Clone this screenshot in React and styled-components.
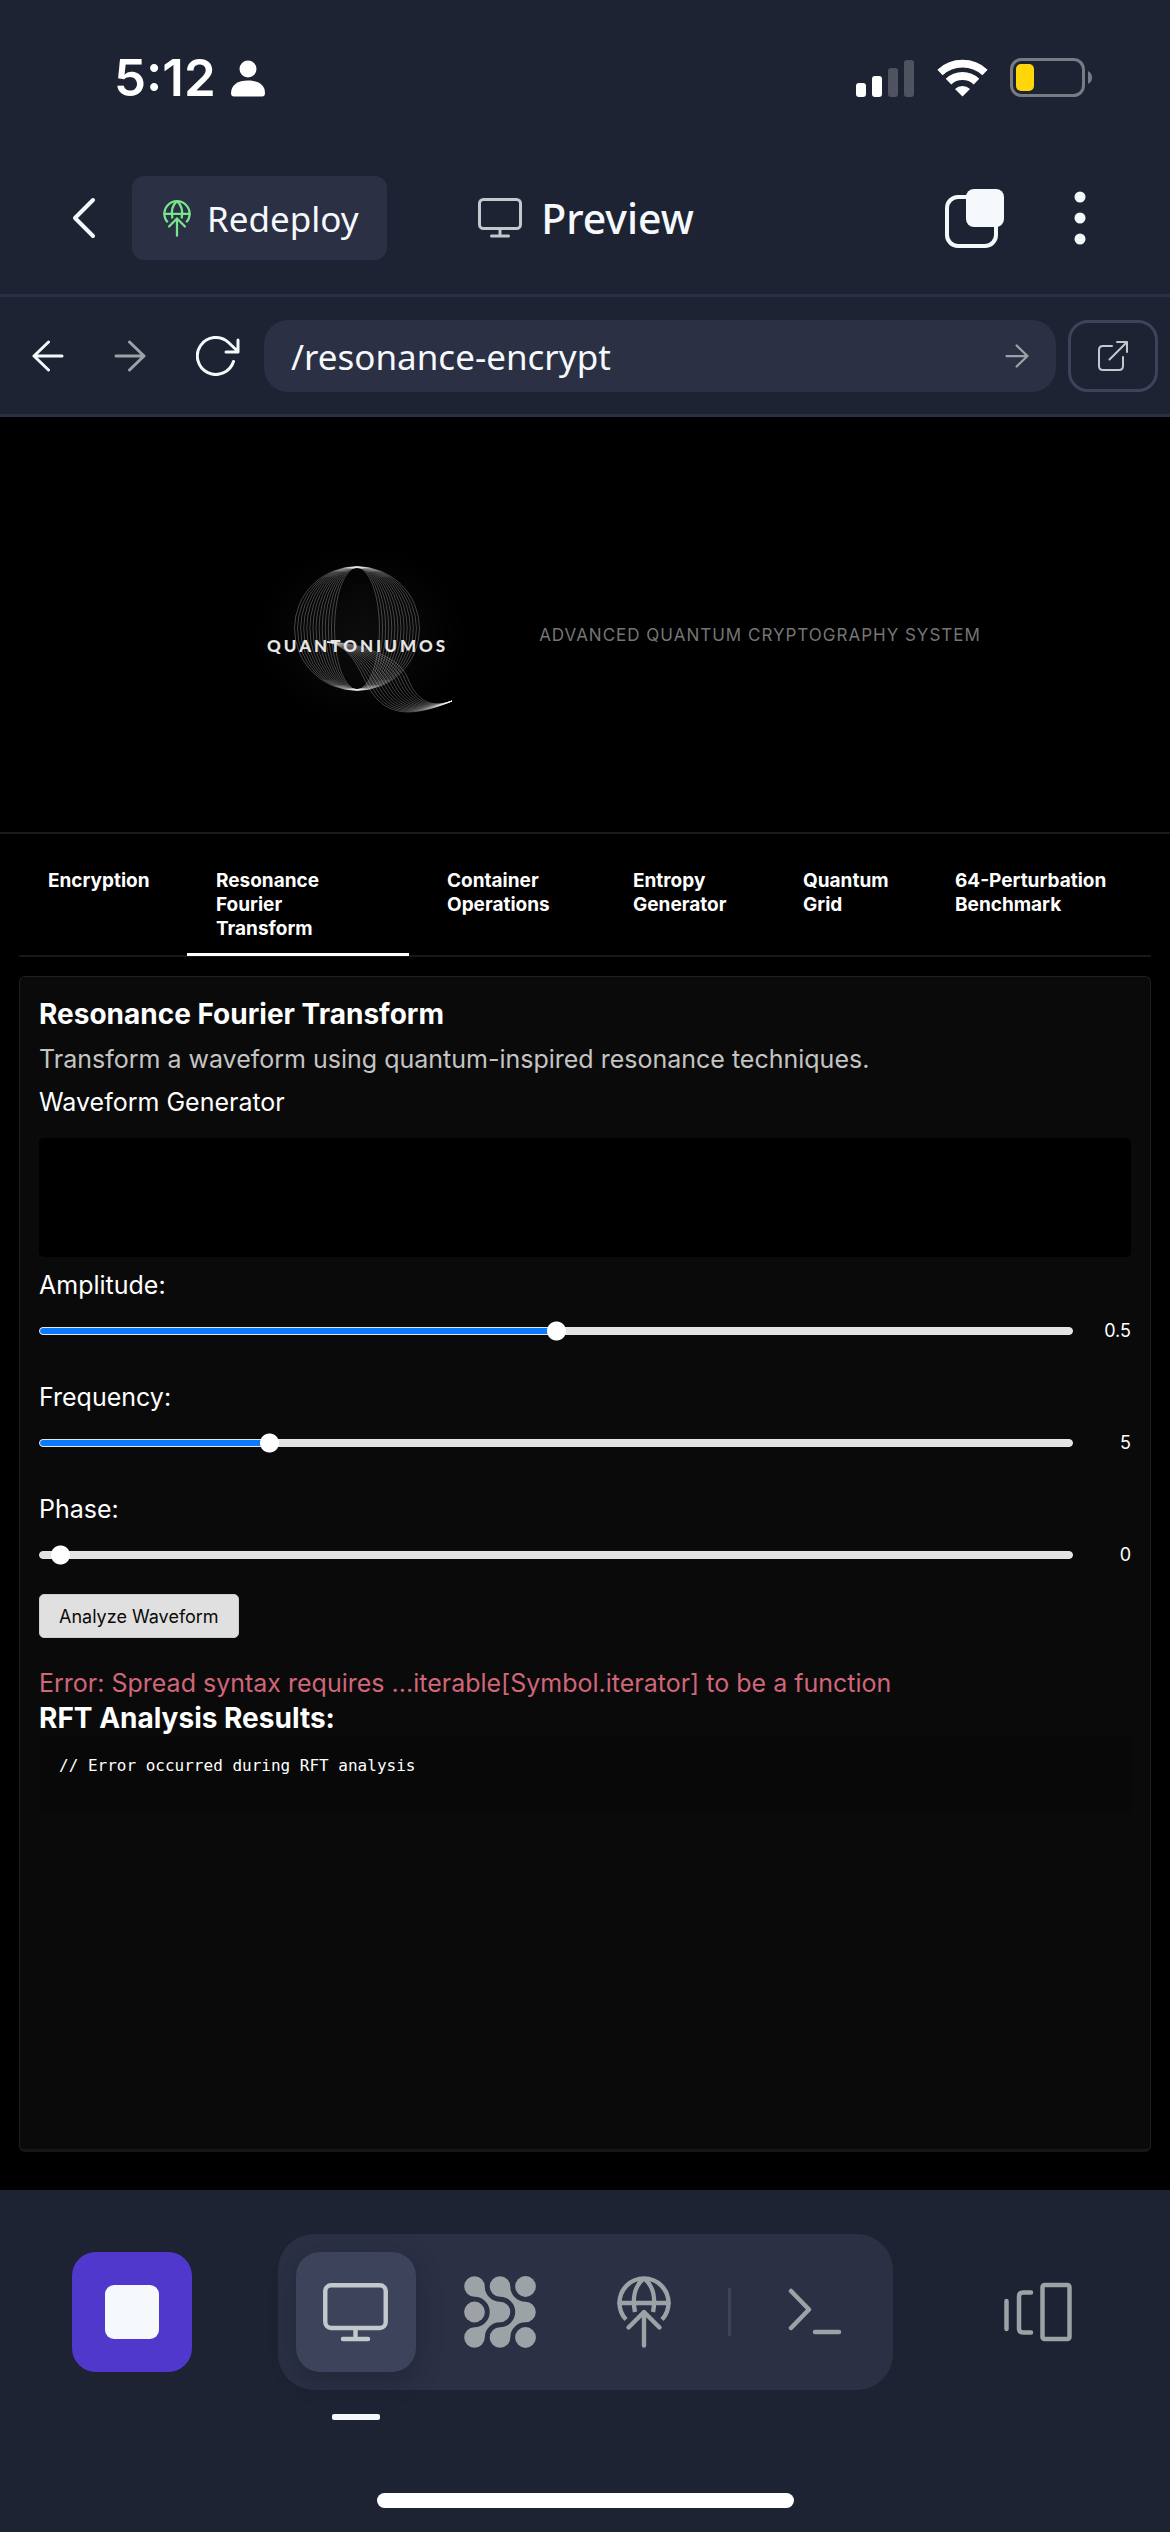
import React, { useState } from "react";
import styled, { createGlobalStyle } from "styled-components";

const sans = '"Inter", "Liberation Sans", sans-serif';
const chrome = '"Noto Sans", "Open Sans", sans-serif';
const navy = "#1d2332";
const slate = "#2b3044";
const slateLight = "#3c435b";
const paper = "#f5f9fc";
const muted = "#9da2a6";

const GlobalStyle = createGlobalStyle`
  *, *::before, *::after { box-sizing: border-box; }
  body { margin: 0; background: #000; }
  h1, h2, h3, p, pre { margin: 0; }
  button, input { font: inherit; color: inherit; }
`;

const Screen = styled.div`
  display: flex;
  flex-direction: column;
  min-height: 100vh;
  background: #000;
  color: #fff;
  font-family: ${sans};
`;

const Icon = styled.svg`
  display: block;
  flex: none;
  fill: none;
  stroke: currentColor;
  stroke-width: ${(p) => p.$stroke || 3};
  stroke-linecap: round;
  stroke-linejoin: round;
`;

const PlainButton = styled.button`
  display: flex;
  align-items: center;
  justify-content: center;
  padding: 0;
  border: 0;
  background: none;
  color: ${(p) => p.$color || paper};
  cursor: pointer;
`;

/* Status bar */
const StatusBar = styled.div`
  display: flex;
  align-items: center;
  justify-content: space-between;
  padding: 48px 78px 34px 114px;
  background: ${navy};
`;

const StatusGroup = styled.div`
  display: flex;
  align-items: center;
  gap: ${(p) => p.$gap}px;
`;

const Clock = styled.span`
  font-size: 51px;
  line-height: 60px;
  font-weight: 600;
`;

/* App header */
const Header = styled.header`
  display: grid;
  grid-template-columns: 1fr auto 1fr;
  align-items: center;
  padding: 34px 70px 34px 72px;
  background: ${navy};
  border-bottom: 3px solid ${slate};
  font-family: ${chrome};
`;

const HeaderSide = styled.div`
  display: flex;
  align-items: center;
  justify-content: ${(p) => (p.$end ? "flex-end" : "flex-start")};
  gap: ${(p) => (p.$end ? 56 : 36)}px;
`;

const Redeploy = styled.button`
  display: flex;
  align-items: center;
  gap: 16px;
  height: 84px;
  padding: 0 28px 0 31px;
  border: 0;
  border-radius: 12px;
  background: ${slate};
  color: ${paper};
  font-size: 35px;
  cursor: pointer;
`;

const Title = styled.h1`
  display: flex;
  align-items: center;
  gap: 19px;
  color: ${paper};
  font-size: 41px;
  line-height: 48px;
  font-weight: 500;
`;

/* Address bar */
const AddressBar = styled.nav`
  display: flex;
  align-items: center;
  gap: 12px;
  padding: 23px 12px 22px 32px;
  background: ${navy};
  border-bottom: 3px solid ${slate};
  font-family: ${chrome};
`;

const HistoryButtons = styled.div`
  display: flex;
  align-items: center;
  gap: 50px;
  margin-right: 12px;
`;

const Address = styled.form`
  display: flex;
  align-items: center;
  flex: 1;
  min-width: 0;
  height: 72px;
  padding: 0 27px;
  border-radius: 24px;
  background: ${slate};
`;

const AddressInput = styled.input`
  flex: 1;
  min-width: 0;
  padding: 0;
  border: 0;
  outline: 0;
  background: none;
  color: ${paper};
  font-size: 35px;
`;

const OpenExternal = styled(PlainButton)`
  width: 90px;
  height: 72px;
  border: 3px solid ${slateLight};
  border-radius: 20px;
`;

/* Page banner */
const Banner = styled.div`
  display: flex;
  align-items: center;
  justify-content: center;
  gap: 60px;
  padding: 128px 0 107px 60px;
  border-bottom: 2px solid #1a1a1a;
`;

const Tagline = styled.p`
  color: #757575;
  font-size: 17px;
  line-height: 24px;
  letter-spacing: 1px;
  text-transform: uppercase;
`;

const Wordmark = styled.text`
  fill: #e6e6e6;
  stroke: none;
  font-family: "Lato", sans-serif;
  font-size: 17px;
  font-weight: 900;
  letter-spacing: 3px;
`;

/* Tabs and panel */
const Content = styled.main`
  display: flex;
  flex-direction: column;
  flex: 1;
  padding: 20px 19px 38px;
`;

const TabList = styled.div`
  display: grid;
  grid-template-columns: 159fr 222fr 177fr 161fr 143fr 225fr;
  gap: 9px;
  border-bottom: 2px solid #171717;
`;

const Tab = styled.button`
  display: flex;
  align-items: flex-start;
  margin-bottom: -1px;
  padding: 15px 0 12px 29px;
  border: 0;
  border-bottom: 3px solid ${(p) => (p.$active ? "#fff" : "transparent")};
  background: none;
  color: #fff;
  font-size: 19px;
  line-height: 24px;
  font-weight: 700;
  text-align: left;
  white-space: pre-line;
  cursor: pointer;
`;

const Panel = styled.section`
  display: flex;
  flex-direction: column;
  align-items: stretch;
  flex: 1;
  margin-top: 19px;
  padding: 16px 19px;
  border: 1px solid #202020;
  border-bottom: 3px solid #171717;
  border-radius: 6px;
  background: #0a0a0a;
`;

const PanelTitle = styled.h2`
  margin-bottom: 2px;
  font-size: 28px;
  line-height: 43px;
  font-weight: 700;
`;

const BodyText = styled.p`
  color: ${(p) => p.$color || "#fff"};
  font-size: 25px;
  line-height: 43px;
`;

const WaveCanvas = styled.canvas`
  width: 100%;
  height: 119px;
  margin: 14px 0 8px;
  border-radius: 5px;
  background: #000;
`;

const Fields = styled.div`
  display: grid;
  gap: 34px;
`;

const Field = styled.div`
  display: grid;
  grid-template-columns: 1fr 58px;
  row-gap: 14px;
  align-items: center;
`;

const FieldLabel = styled.label`
  grid-column: 1 / -1;
  font-size: 25px;
  line-height: 40px;
`;

const FieldValue = styled.output`
  font-size: 18px;
  line-height: 24px;
  text-align: right;
`;

const Range = styled.input`
  appearance: none;
  width: 100%;
  height: 24px;
  margin: 0;
  background: none;
  cursor: pointer;

  &::-webkit-slider-runnable-track {
    height: 8px;
    border: 1px solid #e9e4e6;
    border-radius: 4px;
    background: linear-gradient(#0a7bff, #0a7bff) 0 0 / var(--fill) 100% no-repeat #e3e3e3;
  }

  &::-webkit-slider-thumb {
    appearance: none;
    width: 41px;
    height: 22px;
    margin-top: -8px;
    background: radial-gradient(circle, #fff 9px, transparent 10px);
  }
`;

const Analyze = styled.button`
  align-self: flex-start;
  height: 44px;
  margin: 27px 0 28px;
  padding: 0 19px;
  border: 1px solid #cfcfcf;
  border-radius: 5px;
  background: #e0e0e0;
  color: #0a0a0a;
  font-size: 18px;
  cursor: pointer;
`;

const ErrorText = styled.p`
  color: #cf6679;
  font-size: 25px;
  line-height: 35px;
`;

const ResultsTitle = styled.h3`
  font-size: 28px;
  line-height: 35px;
  font-weight: 700;
`;

const Results = styled.pre`
  min-height: 76px;
  padding: 18px 20px;
  background: #080808;
  font-family: "DejaVu Sans Mono", monospace;
  font-size: 16px;
  line-height: 24px;
`;

/* Bottom dock */
const Footer = styled.footer`
  padding: 44px 72px 24px;
  background: ${navy};
`;

const DockRow = styled.div`
  display: flex;
  justify-content: space-between;
`;

const DockSquare = styled(PlainButton)`
  width: 120px;
  height: 120px;
  margin-top: ${(p) => (p.$outer ? 18 : 0)}px;
  border-radius: 24px;
  background: ${(p) => p.$bg || "none"};
  box-shadow: ${(p) => (p.$raised ? "0 8px 24px rgba(20, 24, 40, 0.4)" : "none")};
`;

const StopMark = styled.span`
  width: 54px;
  height: 54px;
  border-radius: 9px;
  background: ${paper};
`;

const Dock = styled.div`
  display: flex;
  align-items: center;
  gap: 24px;
  padding: 18px;
  border-radius: 36px;
  background: ${slate};
`;

const Divider = styled.span`
  width: 3px;
  height: 48px;
  background: ${slateLight};
`;

const ActiveMark = styled.div`
  width: 48px;
  height: 6px;
  margin: 24px 0 0 54px;
  border-radius: 2px;
  background: ${paper};
`;

const HomeIndicator = styled.div`
  width: 417px;
  height: 15px;
  margin: 73px auto 0;
  border-radius: 8px;
  background: #fff;
`;

function Monitor({ width, height }) {
  return (
    <Icon width={width} height={height} viewBox="0 0 44 40" color="#c3c8cc" aria-hidden="true">
      <rect x="1.5" y="1.5" width="41" height="29" rx="4" />
      <path d="M22 31v7M13.5 38h17" />
    </Icon>
  );
}

function DeployGlobe({ width, height }) {
  return (
    <Icon width={width} height={height} viewBox="0 0 54 72" $stroke={4.4} aria-hidden="true">
      <path d="M9 43.500A24.500 24.500 0 1 1 45 43.500" strokeLinecap="butt" />
      <path d="M2.500 27H51.500" />
      <path d="M26 3C17 11 15.500 24 18 36M28 3C37 11 38.500 24 36 36" strokeLinecap="butt" />
      <path d="M27 69.500V36M11.500 51.500 27 36l15.500 15.500" />
    </Icon>
  );
}

function Nodes() {
  const chain =
    "M20.800 10.500A15.200 15.200 0 0 0 36 25.700A10.300 10.300 0 0 1 36 46.300A15.200 15.200 0 0 0 20.800 61.500A10.300 10.300 0 1 1 10.500 51.200A15.200 15.200 0 0 0 10.500 20.800A10.300 10.300 0 1 1 20.800 10.500Z";
  return (
    <svg width="72" height="72" viewBox="0 0 72 72" fill="currentColor" aria-hidden="true">
      <path d={chain} />
      <path d={chain} transform="translate(25.500 0)" />
      <circle cx="61.500" cy="10.500" r="10.400" />
      <circle cx="10.500" cy="36" r="10.400" />
      <circle cx="61.500" cy="61.500" r="10.400" />
    </svg>
  );
}

const mix = (a, b, t) => a + (b - a) * t;

function Logo() {
  const count = 14;
  const steps = Array.from({ length: count }, (_, i) => i / (count - 1));
  const upper = [78, 97, 110, 97, 152, 112, 159, 134, 167, 154, 180, 164, 203, 156];
  const lower = [78, 97, 106, 102, 112, 132, 122, 146, 138, 172, 165, 172, 203, 156];
  return (
    <svg width="230" height="180" viewBox="0 0 230 180" role="img" aria-label="QuantoniumOS">
      <defs>
        <radialGradient id="halo">
          <stop offset="0" stopColor="#fff" stopOpacity="0.05" />
          <stop offset="1" stopColor="#fff" stopOpacity="0" />
        </radialGradient>
      </defs>
      <ellipse cx="112" cy="90" rx="105" ry="90" fill="url(#halo)" />
      <g fill="none" stroke="#fff" strokeOpacity="0.32" strokeWidth="0.8">
        {steps.map((t) => (
          <ellipse key={t} cx="108" cy="83.500" rx={mix(62.5, 22.5, t)} ry={mix(62, 61, t)} />
        ))}
        {steps.map((t) => {
          const p = upper.map((v, i) => mix(v, lower[i], t).toFixed(1));
          return (
            <path
              key={t}
              d={`M${p[0]} ${p[1]}C${p[2]} ${p[3]} ${p[4]} ${p[5]} ${p[6]} ${p[7]}C${p[8]} ${p[9]} ${p[10]} ${p[11]} ${p[12]} ${p[13]}`}
            />
          );
        })}
      </g>
      <Wordmark x="18" y="107">QUANTONIUMOS</Wordmark>
    </svg>
  );
}

const tabs = [
  "Encryption",
  "Resonance\nFourier\nTransform",
  "Container\nOperations",
  "Entropy\nGenerator",
  "Quantum\nGrid",
  "64-Perturbation\nBenchmark",
];

function Slider({ id, label, min, max, step, initial }) {
  const [value, setValue] = useState(initial);
  const ratio = (value - min) / (max - min);
  const fill = ratio === 0 ? "0px" : `calc(20px + (100% - 41px) * ${ratio})`;
  return (
    <Field>
      <FieldLabel htmlFor={id}>{label}</FieldLabel>
      <Range
        id={id}
        type="range"
        min={min}
        max={max}
        step={step}
        value={value}
        onChange={(e) => setValue(Number(e.target.value))}
        style={{ "--fill": fill }}
      />
      <FieldValue htmlFor={id}>{value}</FieldValue>
    </Field>
  );
}

export default function App() {
  const [active, setActive] = useState(1);
  const [path, setPath] = useState("/resonance-encrypt");

  return (
    <Screen>
      <GlobalStyle />
      <StatusBar>
        <StatusGroup $gap={15}>
          <Clock>5:12</Clock>
          <svg width="34" height="37" viewBox="0 0 34 37" fill="#fff" aria-hidden="true">
            <circle cx="17" cy="9" r="8.500" />
            <path d="M0 33C0 25 7 20.500 17 20.500S34 25 34 33Q34 36.500 31 36.500H3Q0 36.500 0 33Z" />
          </svg>
        </StatusGroup>
        <StatusGroup $gap={22}>
          <svg width="59" height="38" viewBox="0 0 59 38" fill="#fff" aria-hidden="true">
            <rect x="0" y="24" width="10" height="14" rx="3" />
            <rect x="16" y="17" width="10" height="21" rx="3" />
            <rect x="32" y="9" width="10" height="29" rx="3" fillOpacity="0.22" />
            <rect x="48" y="1" width="10" height="37" rx="3" fillOpacity="0.22" />
          </svg>
          <svg width="51" height="38" viewBox="0 0 51 38" fill="none" stroke="#fff" aria-hidden="true">
            <path d="M3 13.500A33.200 33.200 0 0 1 48 13.500" strokeWidth="7.700" />
            <path d="M11.500 22.700A20.300 20.300 0 0 1 39.500 22.700" strokeWidth="8" />
            <path d="M25.500 37.500 18 29.900A11.300 11.300 0 0 1 33 29.900Z" fill="#fff" stroke="none" />
          </svg>
          <svg width="82" height="40" viewBox="0 0 82 40" aria-hidden="true">
            <rect x="1.500" y="1.500" width="72" height="36" rx="10" fill="none" stroke="#777b84" strokeWidth="3" />
            <rect x="6" y="6" width="18" height="27" rx="5" fill="#ffd60a" />
            <path d="M78 13Q82 15 82 19.500T78 26Z" fill="#777b84" />
          </svg>
        </StatusGroup>
      </StatusBar>

      <Header>
        <HeaderSide>
          <PlainButton aria-label="Back">
            <Icon width="24" height="42" viewBox="0 0 24 42" $stroke={4}>
              <path d="M21 3 3 21l18 18" />
            </Icon>
          </PlainButton>
          <Redeploy>
            <PlainButton as="span" $color="#78e68a">
              <DeployGlobe width={28} height={37} />
            </PlainButton>
            Redeploy
          </Redeploy>
        </HeaderSide>
        <Title>
          <Monitor width={44} height={40} />
          Preview
        </Title>
        <HeaderSide $end>
          <PlainButton aria-label="Tabs">
            <Icon width="59" height="59" viewBox="0 0 59 59" $stroke={4}>
              <rect x="2" y="8" width="49" height="49" rx="11" />
              <rect x="21" y="0" width="38" height="38" rx="8" fill={paper} stroke="none" />
            </Icon>
          </PlainButton>
          <PlainButton aria-label="More">
            <svg width="40" height="54" viewBox="0 0 40 54" fill="currentColor">
              <circle cx="20" cy="6" r="5.500" />
              <circle cx="20" cy="27" r="5.500" />
              <circle cx="20" cy="48" r="5.500" />
            </svg>
          </PlainButton>
        </HeaderSide>
      </Header>

      <AddressBar>
        <HistoryButtons>
          <PlainButton aria-label="Previous page">
            <Icon width="32" height="32" viewBox="0 0 32 32">
              <path d="M30 16H2M16.500 2 2 16l14.500 14" />
            </Icon>
          </PlainButton>
          <PlainButton aria-label="Next page" $color={muted}>
            <Icon width="32" height="32" viewBox="0 0 32 32">
              <path d="M2 16h28M15.500 2 30 16 15.500 30" />
            </Icon>
          </PlainButton>
          <PlainButton aria-label="Reload">
            <Icon width="44" height="40" viewBox="0 0 44 40">
              <path d="M37.500 25.500A18.500 18.500 0 1 1 32.500 6.500L42 15.500M42 4v12H30" />
            </Icon>
          </PlainButton>
        </HistoryButtons>
        <Address onSubmit={(e) => e.preventDefault()}>
          <AddressInput aria-label="Address" value={path} onChange={(e) => setPath(e.target.value)} />
          <PlainButton aria-label="Go" $color={muted}>
            <Icon width="24" height="24" viewBox="0 0 32 32">
              <path d="M2 16h28M15.500 2 30 16 15.500 30" />
            </Icon>
          </PlainButton>
        </Address>
        <OpenExternal aria-label="Open in new window" $color="#c3c8cc">
          <Icon width="30" height="30" viewBox="0 0 30 30" $stroke={2}>
            <path d="M14 5H5Q1 5 1 9v16q0 4 4 4h16q4 0 4-4v-9M11.500 18.500 29 1M19 1h10v10" />
          </Icon>
        </OpenExternal>
      </AddressBar>

      <Banner>
        <Logo />
        <Tagline>Advanced Quantum Cryptography System</Tagline>
      </Banner>

      <Content>
        <TabList role="tablist">
          {tabs.map((name, i) => (
            <Tab key={name} role="tab" aria-selected={i === active} $active={i === active} onClick={() => setActive(i)}>
              {name}
            </Tab>
          ))}
        </TabList>
        <Panel role="tabpanel">
          <PanelTitle>Resonance Fourier Transform</PanelTitle>
          <BodyText $color="#c4c4c4">Transform a waveform using quantum-inspired resonance techniques.</BodyText>
          <BodyText>Waveform Generator</BodyText>
          <WaveCanvas />
          <Fields>
            <Slider id="amplitude" label="Amplitude:" min={0} max={1} step={0.1} initial={0.5} />
            <Slider id="frequency" label="Frequency:" min={1} max={20} step={1} initial={5} />
            <Slider id="phase" label="Phase:" min={0} max={6} step={0.1} initial={0} />
          </Fields>
          <Analyze>Analyze Waveform</Analyze>
          <ErrorText>Error: Spread syntax requires ...iterable[Symbol.iterator] to be a function</ErrorText>
          <ResultsTitle>RFT Analysis Results:</ResultsTitle>
          <Results>// Error occurred during RFT analysis</Results>
        </Panel>
      </Content>

      <Footer>
        <DockRow>
          <DockSquare $outer $bg="#5138cc" aria-label="Stop">
            <StopMark />
          </DockSquare>
          <div>
            <Dock>
              <DockSquare $bg={slateLight} $raised aria-label="Preview">
                <Monitor width={65} height={59} />
              </DockSquare>
              <DockSquare $color={muted} aria-label="Agent">
                <Nodes />
              </DockSquare>
              <DockSquare $color={muted} aria-label="Deployments">
                <DeployGlobe width={54} height={72} />
              </DockSquare>
              <Divider />
              <DockSquare $color={muted} aria-label="Shell">
                <Icon width="54" height="48" viewBox="0 0 54 48" $stroke={4.5}>
                  <path d="M3 3l18 18.500L3 40M27 44h24" />
                </Icon>
              </DockSquare>
            </Dock>
            <ActiveMark />
          </div>
          <DockSquare $outer $color={muted} aria-label="Switch panes">
            <Icon width="68" height="60" viewBox="0 0 68 60" $stroke={4.5}>
              <path d="M2.500 19v28M27 10.500H19Q15 10.500 15 14.500v32Q15 50.500 19 50.500h8" />
              <rect x="38.500" y="3" width="27" height="54" rx="2" />
            </Icon>
          </DockSquare>
        </DockRow>
        <HomeIndicator />
      </Footer>
    </Screen>
  );
}
